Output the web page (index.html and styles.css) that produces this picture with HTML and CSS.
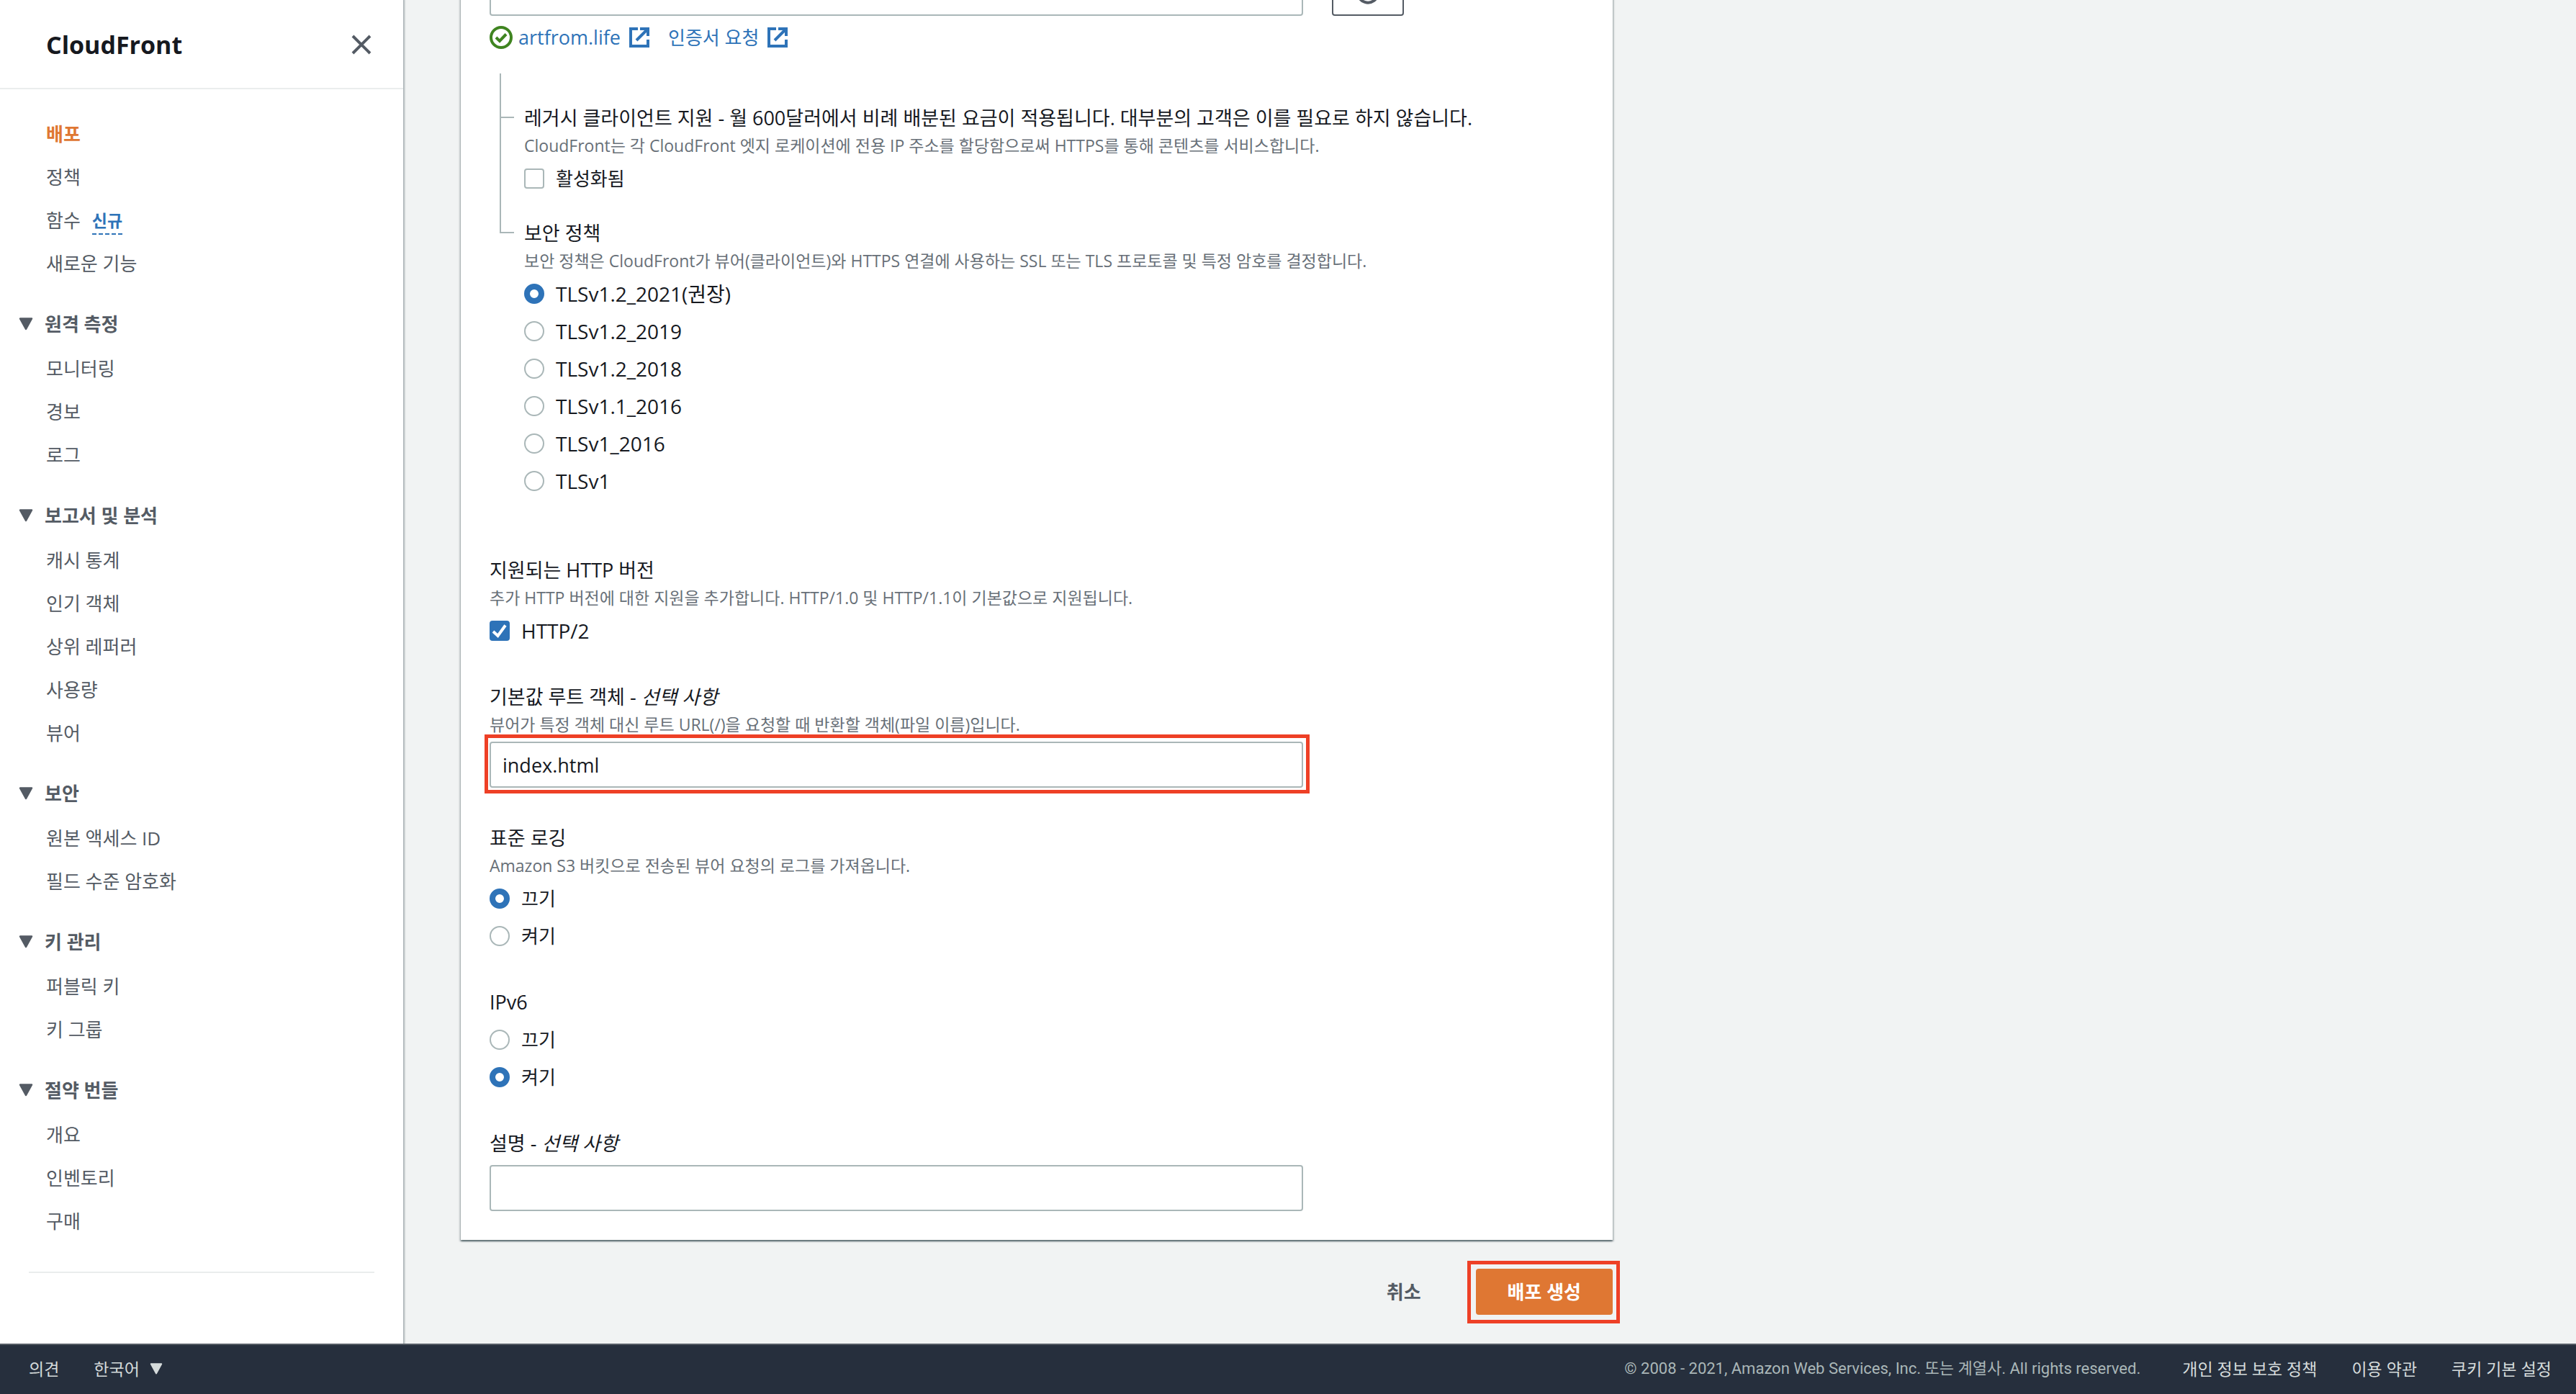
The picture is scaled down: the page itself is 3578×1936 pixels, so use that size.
FILE: index.html
```html
<!DOCTYPE html>
<html lang="ko">
<head>
<meta charset="utf-8">
<meta name="viewport" content="width=device-width, initial-scale=1">
<title>CloudFront</title>
<link rel="stylesheet" href="styles.css">
</head>
<body>
<svg class="sprite" aria-hidden="true">
  <symbol id="caret" viewBox="0 0 20 18"><path d="M2 1.500H18L10 16Z" fill="currentColor" stroke="currentColor" stroke-width="2.500" stroke-linejoin="round"/></symbol>
  <symbol id="external" viewBox="0 0 28 28"><path d="M12 2H2V26H26V17M15 2H26V12M10 18L25 3" fill="none" stroke="currentColor" stroke-width="4"/></symbol>
</svg>
<div class="app">
  <aside class="sidebar">
    <header class="sidebar-head">
      <h2 class="sidebar-title">CloudFront</h2>
      <button class="icon-button" type="button" aria-label="닫기">
        <svg class="close-icon" viewBox="0 0 28 28"><path d="M2 2L26 26M26 2L2 26" fill="none" stroke="currentColor" stroke-width="4"/></svg>
      </button>
    </header>
    <nav class="nav">
      <ul class="nav-list">
        <li><a class="active" href="#">배포</a></li>
        <li><a href="#">정책</a></li>
        <li class="with-badge"><a href="#">함수</a><button class="badge" type="button">신규</button></li>
        <li><a href="#">새로운 기능</a></li>
      </ul>
      <section class="nav-section">
        <button class="nav-toggle" type="button"><svg class="caret"><use href="#caret"/></svg>원격 측정</button>
        <ul class="nav-list">
          <li><a href="#">모니터링</a></li>
          <li><a href="#">경보</a></li>
          <li><a href="#">로그</a></li>
        </ul>
      </section>
      <section class="nav-section">
        <button class="nav-toggle" type="button"><svg class="caret"><use href="#caret"/></svg>보고서 및 분석</button>
        <ul class="nav-list">
          <li><a href="#">캐시 통계</a></li>
          <li><a href="#">인기 객체</a></li>
          <li><a href="#">상위 레퍼러</a></li>
          <li><a href="#">사용량</a></li>
          <li><a href="#">뷰어</a></li>
        </ul>
      </section>
      <section class="nav-section">
        <button class="nav-toggle" type="button"><svg class="caret"><use href="#caret"/></svg>보안</button>
        <ul class="nav-list">
          <li><a href="#">원본 액세스 ID</a></li>
          <li><a href="#">필드 수준 암호화</a></li>
        </ul>
      </section>
      <section class="nav-section">
        <button class="nav-toggle" type="button"><svg class="caret"><use href="#caret"/></svg>키 관리</button>
        <ul class="nav-list">
          <li><a href="#">퍼블릭 키</a></li>
          <li><a href="#">키 그룹</a></li>
        </ul>
      </section>
      <section class="nav-section">
        <button class="nav-toggle" type="button"><svg class="caret"><use href="#caret"/></svg>절약 번들</button>
        <ul class="nav-list">
          <li><a href="#">개요</a></li>
          <li><a href="#">인벤토리</a></li>
          <li><a href="#">구매</a></li>
        </ul>
      </section>
      <hr class="nav-end">
    </nav>
  </aside>

  <main class="main">
    <form class="form">
      <div class="panel">
        <div class="field">
          <div class="select-row">
            <select class="input" aria-label="사용자 정의 SSL 인증서"><option></option></select>
            <button class="refresh" type="button" aria-label="새로 고침">
              <svg viewBox="0 0 32 32"><path d="M27 7A14 14 0 1 0 30 16M28 0V9H19" fill="none" stroke="currentColor" stroke-width="4"/></svg>
            </button>
          </div>
          <div class="cert-links">
            <svg class="status-icon" viewBox="0 0 32 32"><circle cx="16" cy="16" r="14" fill="none" stroke="currentColor" stroke-width="4"/><path d="M9 16L14 21L23 11.500" fill="none" stroke="currentColor" stroke-width="4"/></svg>
            <a class="link latin" href="#">artfrom.life<svg class="external"><use href="#external"/></svg></a>
            <a class="link request" href="#">인증서 요청<svg class="external"><use href="#external"/></svg></a>
          </div>
        </div>

        <div class="tree">
          <div class="branch first">
            <div class="rail"><div class="elbow"></div><div class="trunk"></div></div>
            <fieldset class="field">
              <legend class="label">레거시 클라이언트 지원 - 월 600달러에서 비례 배분된 요금이 적용됩니다. 대부분의 고객은 이를 필요로 하지 않습니다.</legend>
              <p class="hint">CloudFront는 각 CloudFront 엣지 로케이션에 전용 IP 주소를 할당함으로써 HTTPS를 통해 콘텐츠를 서비스합니다.</p>
              <div class="choices">
                <label class="choice"><input type="checkbox">활성화됨</label>
              </div>
            </fieldset>
          </div>
          <div class="branch last">
            <div class="rail"><div class="elbow"></div></div>
            <fieldset class="field">
              <legend class="label">보안 정책</legend>
              <p class="hint">보안 정책은 CloudFront가 뷰어(클라이언트)와 HTTPS 연결에 사용하는 SSL 또는 TLS 프로토콜 및 특정 암호를 결정합니다.</p>
              <div class="choices latin-choices">
                <label class="choice"><input type="radio" name="tls" checked>TLSv1.2_2021(권장)</label>
                <label class="choice"><input type="radio" name="tls">TLSv1.2_2019</label>
                <label class="choice"><input type="radio" name="tls">TLSv1.2_2018</label>
                <label class="choice"><input type="radio" name="tls">TLSv1.1_2016</label>
                <label class="choice"><input type="radio" name="tls">TLSv1_2016</label>
                <label class="choice"><input type="radio" name="tls">TLSv1</label>
              </div>
            </fieldset>
          </div>
        </div>

        <div class="stack">
          <fieldset class="field">
            <legend class="label">지원되는 HTTP 버전</legend>
            <p class="hint">추가 HTTP 버전에 대한 지원을 추가합니다. HTTP/1.0 및 HTTP/1.1이 기본값으로 지원됩니다.</p>
            <div class="choices latin-choices">
              <label class="choice"><input type="checkbox" checked>HTTP/2</label>
            </div>
          </fieldset>
          <div class="field">
            <label class="label" for="root">기본값 루트 객체 - <em>선택 사항</em></label>
            <p class="hint">뷰어가 특정 객체 대신 루트 URL(/)을 요청할 때 반환할 객체(파일 이름)입니다.</p>
            <div class="control marked"><input class="input" id="root" type="text" value="index.html"></div>
          </div>
          <fieldset class="field">
            <legend class="label">표준 로깅</legend>
            <p class="hint">Amazon S3 버킷으로 전송된 뷰어 요청의 로그를 가져옵니다.</p>
            <div class="choices">
              <label class="choice"><input type="radio" name="log" checked>끄기</label>
              <label class="choice"><input type="radio" name="log">켜기</label>
            </div>
          </fieldset>
          <fieldset class="field">
            <legend class="label">IPv6</legend>
            <div class="choices">
              <label class="choice"><input type="radio" name="ipv6">끄기</label>
              <label class="choice"><input type="radio" name="ipv6" checked>켜기</label>
            </div>
          </fieldset>
          <div class="field">
            <label class="label" for="desc">설명 - <em>선택 사항</em></label>
            <div class="control"><input class="input" id="desc" type="text"></div>
          </div>
        </div>
      </div>
      <div class="actions">
        <button class="button" type="button">취소</button>
        <div class="marked wide"><button class="button primary" type="submit">배포 생성</button></div>
      </div>
    </form>
  </main>

  <footer class="footer">
    <a href="#">의견</a>
    <button class="language" type="button">한국어<svg class="caret small"><use href="#caret"/></svg></button>
    <span class="copyright">© 2008 - 2021, Amazon Web Services, Inc. 또는 계열사. All rights reserved.</span>
    <a href="#">개인 정보 보호 정책</a>
    <a href="#">이용 약관</a>
    <a href="#">쿠키 기본 설정</a>
  </footer>
</div>
</body>
</html>
```
FILE: styles.css
```css
:root {
  --text: #16191f;
  --muted: #687078;
  --nav: #545b64;
  --line: #aab7b8;
  --blue: #2e73b8;
  --orange: #df7733;
  --mark: #ee4026;
}

* { box-sizing: border-box; }

body {
  margin: 0;
  background: #f1f3f3;
  color: var(--text);
  font: 26px/44px "Open Sans", "Noto Sans CJK KR", sans-serif;
}

button, input, select { font: inherit; color: inherit; }
button { border: 0; padding: 0; background: none; cursor: pointer; }
a { color: inherit; text-decoration: none; }
svg { display: block; flex: none; }
.sprite { position: absolute; width: 0; height: 0; }

.app {
  display: grid;
  grid-template: 1fr auto / 560px 1fr;
  min-height: 100vh;
  overflow: hidden;
}

/* Side navigation */
.sidebar {
  position: relative;
  background: #fff;
  color: var(--nav);
  box-shadow: 1px 0 2px 1px rgba(0, 28, 36, 0.3);
}
.sidebar-head {
  display: flex;
  align-items: center;
  justify-content: space-between;
  height: 124px;
  padding: 2px 44px 0 64px;
  border-bottom: 2px solid #eaeded;
}
.sidebar-title { margin: 0; color: var(--text); font-size: 34px; font-weight: 700; }
.close-icon { width: 28px; height: 28px; }

.nav { padding: 40px 40px 0; }
.nav-list {
  display: flex;
  flex-direction: column;
  gap: 16px;
  margin: 0;
  padding: 0 0 0 24px;
  list-style: none;
}
.nav-list .active { color: var(--orange); font-weight: 700; }
.with-badge { display: flex; align-items: center; gap: 16px; height: 44px; }
.badge {
  padding-top: 2px;
  border-bottom: 2px dashed;
  color: var(--blue);
  font-size: 23px;
  font-weight: 700;
  line-height: 36px;
}
.nav-section { margin: 40px 0 0 -14px; }
.nav-section .nav-list { padding-left: 38px; }
.nav-toggle {
  display: flex;
  align-items: center;
  gap: 16px;
  margin-bottom: 18px;
  font-weight: 700;
}
.caret { width: 20px; height: 18px; }
.nav-end { margin: 48px 0; border: 0; border-top: 2px solid #eaeded; }

/* Form, scrolled so that its upper part is out of view */
.main { padding-left: 80px; }
.form { max-width: 1600px; margin-top: -42px; padding-bottom: 40px; }
.panel {
  padding: 0 40px 40px;
  background: #fff;
  box-shadow:
    0 2px 2px rgba(0, 28, 36, 0.5),
    2px 2px 2px rgba(0, 28, 36, 0.15),
    -2px 2px 2px rgba(0, 28, 36, 0.15);
}
.field { min-width: 0; margin: 0; padding: 0; border: 0; }
.label { display: block; padding: 0; font-size: 27px; }
.hint { margin: 0; color: var(--muted); font-size: 23px; line-height: 32px; }
.choices { display: flex; flex-direction: column; align-items: flex-start; gap: 8px; padding-top: 8px; }
.choice { display: flex; align-items: center; gap: 16px; }
.latin-choices { font-size: 28px; }
.control { max-width: 1130px; margin-top: 8px; }

.input {
  display: block;
  width: 100%;
  height: 64px;
  padding: 0 16px;
  border: 2px solid var(--line);
  border-radius: 4px;
  background: #fff;
  font-size: 27px;
  appearance: none;
}
.select-row { display: grid; grid-template-columns: minmax(0, 1130px) 100px; gap: 40px; }
.refresh {
  display: grid;
  place-items: center;
  border: 2px solid var(--nav);
  border-radius: 4px;
  color: var(--nav);
}
.refresh svg { width: 32px; height: 32px; }

.cert-links { display: flex; align-items: center; gap: 8px; padding-top: 8px; }
.status-icon { width: 32px; height: 32px; color: #3f8420; }
.link { display: flex; align-items: center; gap: 12px; color: var(--blue); }
.link.latin { font-size: 27px; }
.link.request { margin-left: 18px; }
.external { width: 28px; height: 28px; }

input[type="radio"], input[type="checkbox"] {
  width: 28px;
  height: 28px;
  margin: 0;
  border: 2px solid var(--line);
  background: #fff;
  appearance: none;
}
input[type="radio"] { border-radius: 50%; }
input[type="radio"]:checked { border: 8px solid var(--blue); }
input[type="checkbox"] { border-radius: 4px; }
input[type="checkbox"]:checked {
  border-color: var(--blue);
  background: var(--blue) url("data:image/svg+xml,%3Csvg xmlns='http://www.w3.org/2000/svg' viewBox='0 0 24 24'%3E%3Cpath d='M3 13L9.500 19L20 4.500' fill='none' stroke='white' stroke-width='4'/%3E%3C/svg%3E") center / 24px no-repeat;
}

/* Nested fields hanging from a tree line */
.tree { padding: 28px 0 80px 14px; }
.branch { display: grid; grid-template-columns: 20px minmax(0, 1fr); column-gap: 14px; }
.branch.first .field { margin-top: 40px; }
.branch.last .field { margin-top: 32px; }
.rail { display: flex; flex-direction: column; }
.elbow { height: 62px; border: solid var(--line); border-width: 0 0 2px 2px; }
.branch.last .elbow { height: 54px; }
.trunk { flex: 1; border-left: 2px solid var(--line); }

.stack { display: flex; flex-direction: column; gap: 48px; }

.actions { display: flex; justify-content: flex-end; gap: 32px; padding-top: 40px; }
.button {
  height: 64px;
  padding: 0 44px;
  border-radius: 4px;
  color: var(--nav);
  font-weight: 700;
}
.button.primary { background: var(--orange); color: #fff; }

/* Red call-out frames */
.marked { position: relative; }
.marked::after {
  content: "";
  position: absolute;
  inset: -10px -9px -8px -7px;
  border: 5px solid var(--mark);
  pointer-events: none;
}
.marked.wide::after { inset: -11px -10px -12px -12px; }

/* Footer */
.footer {
  grid-column: 1 / -1;
  position: relative;
  display: flex;
  align-items: center;
  gap: 48px;
  height: 70px;
  padding: 0 34px 2px 40px;
  border-top: 2px solid #545b64;
  background: #262f3d;
  color: #d5dbdb;
  font-size: 23px;
}
.language { display: flex; align-items: center; gap: 14px; }
.caret.small { width: 18px; height: 16px; }
.copyright {
  margin: 0 10px 0 auto;
  color: var(--line);
  font-family: Roboto, "Noto Sans CJK KR", sans-serif;
  font-size: 22px;
}
```
